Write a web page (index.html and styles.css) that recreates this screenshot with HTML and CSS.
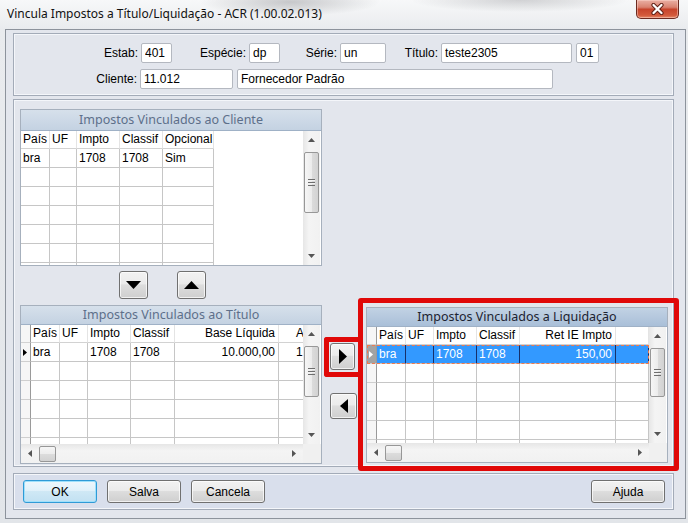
FILE: index.html
```html
<!DOCTYPE html>
<html lang="pt-BR">
<head>
    <meta charset="UTF-8">
    <meta name="viewport" content="width=device-width, initial-scale=1.0">
    <title>Vincula Impostos a Título/Liquidação - ACR (1.00.02.013)</title>
    <link rel="stylesheet" href="styles.css">
</head>
<body>
    <div class="window">
        <div class="titlebar">
            <span class="title">Vincula Impostos a Título/Liquidação - ACR (1.00.02.013)</span>
            <button class="close-btn" aria-label="Fechar">
                <svg width="13" height="12" viewBox="0 0 13 12">
                    <path d="M2.5 2 L10.5 10 M10.5 2 L2.5 10" stroke="#5e2016" stroke-width="4.2" stroke-linecap="round"/>
                    <path d="M2.5 2 L10.5 10 M10.5 2 L2.5 10" stroke="#fff" stroke-width="2.3" stroke-linecap="round"/>
                </svg>
            </button>
        </div>

        <div class="client">
            <!-- dados do titulo -->
            <div class="panel panel-header">
                <div class="field-row">
                    <label class="lbl lbl-estab">Estab:</label>
                    <input class="fld fld-estab" value="401">
                    <label class="lbl lbl-especie">Espécie:</label>
                    <input class="fld fld-especie" value="dp">
                    <label class="lbl lbl-serie">Série:</label>
                    <input class="fld fld-serie" value="un">
                    <label class="lbl lbl-titulo">Título:</label>
                    <input class="fld fld-titulo" value="teste2305">
                    <input class="fld fld-parcela" value="01">
                </div>
                <div class="field-row">
                    <label class="lbl lbl-cliente">Cliente:</label>
                    <input class="fld fld-cliente" value="11.012">
                    <input class="fld fld-nome" value="Fornecedor Padrão">
                </div>
            </div>

            <!-- browses de impostos -->
            <div class="panel panel-main">
                <div class="left-col">
                    <div class="grid-box box-cliente">
                        <div class="g-caption cap-tall">Impostos Vinculados ao Cliente</div>
                        <div class="g-main">
                            <div class="g-view">
                                <div class="g-row g-head">
                                    <div class="g-cell c-pais">País</div>
                                    <div class="g-cell c-uf">UF</div>
                                    <div class="g-cell c-impto">Impto</div>
                                    <div class="g-cell c-classif">Classif</div>
                                    <div class="g-cell c-opc">Opcional</div>
                                </div>
                                <div class="g-row">
                                    <div class="g-cell c-pais">bra</div>
                                    <div class="g-cell c-uf"></div>
                                    <div class="g-cell c-impto">1708</div>
                                    <div class="g-cell c-classif">1708</div>
                                    <div class="g-cell c-opc">Sim</div>
                                </div>
                                <div class="g-row"><div class="g-cell c-pais"></div><div class="g-cell c-uf"></div><div class="g-cell c-impto"></div><div class="g-cell c-classif"></div><div class="g-cell c-opc"></div></div>
                                <div class="g-row"><div class="g-cell c-pais"></div><div class="g-cell c-uf"></div><div class="g-cell c-impto"></div><div class="g-cell c-classif"></div><div class="g-cell c-opc"></div></div>
                                <div class="g-row"><div class="g-cell c-pais"></div><div class="g-cell c-uf"></div><div class="g-cell c-impto"></div><div class="g-cell c-classif"></div><div class="g-cell c-opc"></div></div>
                                <div class="g-row"><div class="g-cell c-pais"></div><div class="g-cell c-uf"></div><div class="g-cell c-impto"></div><div class="g-cell c-classif"></div><div class="g-cell c-opc"></div></div>
                                <div class="g-row"><div class="g-cell c-pais"></div><div class="g-cell c-uf"></div><div class="g-cell c-impto"></div><div class="g-cell c-classif"></div><div class="g-cell c-opc"></div></div>
                                <div class="g-row"><div class="g-cell c-pais"></div><div class="g-cell c-uf"></div><div class="g-cell c-impto"></div><div class="g-cell c-classif"></div><div class="g-cell c-opc"></div></div>
                            </div>
                            <div class="vscroll">
                                <div class="sb-btn"><svg width="7" height="4" viewBox="0 0 7 4"><path d="M0 4 L3.5 0 L7 4 Z" fill="#555"/></svg></div>
                                <div class="sb-thumb-v thumb-cliente"><span class="grip-v"></span></div>
                                <div class="sb-track"></div>
                                <div class="sb-btn"><svg width="7" height="4" viewBox="0 0 7 4"><path d="M0 0 L7 0 L3.5 4 Z" fill="#555"/></svg></div>
                            </div>
                        </div>
                    </div>

                    <div class="move-row">
                        <button class="win-btn move-btn btn-down" aria-label="Descer">
                            <svg width="15" height="8" viewBox="0 0 15 8"><path d="M0 0 L15 0 L7.5 8 Z" fill="#000"/></svg>
                        </button>
                        <button class="win-btn move-btn btn-up" aria-label="Subir">
                            <svg width="15" height="8" viewBox="0 0 15 8"><path d="M0 8 L7.5 0 L15 8 Z" fill="#000"/></svg>
                        </button>
                    </div>

                    <div class="grid-box box-titulo">
                        <div class="g-caption">Impostos Vinculados ao Título</div>
                        <div class="g-main">
                            <div class="g-view">
                                <div class="g-row g-head">
                                    <div class="g-cell c-ind"></div>
                                    <div class="g-cell c-pais">País</div>
                                    <div class="g-cell c-uf">UF</div>
                                    <div class="g-cell c-impto">Impto</div>
                                    <div class="g-cell c-classif2">Classif</div>
                                    <div class="g-cell c-base num">Base Líquida</div>
                                    <div class="g-cell c-aliq">Alíquota</div>
                                </div>
                                <div class="g-row">
                                    <div class="g-cell c-ind ind-cur"><svg width="4" height="7" viewBox="0 0 4 7"><path d="M0 0 L4 3.5 L0 7 Z" fill="#000"/></svg></div>
                                    <div class="g-cell c-pais">bra</div>
                                    <div class="g-cell c-uf"></div>
                                    <div class="g-cell c-impto">1708</div>
                                    <div class="g-cell c-classif2">1708</div>
                                    <div class="g-cell c-base num">10.000,00</div>
                                    <div class="g-cell c-aliq">1,50</div>
                                </div>
                                <div class="g-row"><div class="g-cell c-ind"></div><div class="g-cell c-pais"></div><div class="g-cell c-uf"></div><div class="g-cell c-impto"></div><div class="g-cell c-classif2"></div><div class="g-cell c-base"></div><div class="g-cell c-aliq"></div></div>
                                <div class="g-row"><div class="g-cell c-ind"></div><div class="g-cell c-pais"></div><div class="g-cell c-uf"></div><div class="g-cell c-impto"></div><div class="g-cell c-classif2"></div><div class="g-cell c-base"></div><div class="g-cell c-aliq"></div></div>
                                <div class="g-row"><div class="g-cell c-ind"></div><div class="g-cell c-pais"></div><div class="g-cell c-uf"></div><div class="g-cell c-impto"></div><div class="g-cell c-classif2"></div><div class="g-cell c-base"></div><div class="g-cell c-aliq"></div></div>
                                <div class="g-row"><div class="g-cell c-ind"></div><div class="g-cell c-pais"></div><div class="g-cell c-uf"></div><div class="g-cell c-impto"></div><div class="g-cell c-classif2"></div><div class="g-cell c-base"></div><div class="g-cell c-aliq"></div></div>
                                <div class="g-row"><div class="g-cell c-ind"></div><div class="g-cell c-pais"></div><div class="g-cell c-uf"></div><div class="g-cell c-impto"></div><div class="g-cell c-classif2"></div><div class="g-cell c-base"></div><div class="g-cell c-aliq"></div></div>
                            </div>
                            <div class="vscroll">
                                <div class="sb-btn"><svg width="7" height="4" viewBox="0 0 7 4"><path d="M0 4 L3.5 0 L7 4 Z" fill="#555"/></svg></div>
                                <div class="sb-thumb-v thumb-titulo"><span class="grip-v"></span></div>
                                <div class="sb-track"></div>
                                <div class="sb-btn"><svg width="7" height="4" viewBox="0 0 7 4"><path d="M0 0 L7 0 L3.5 4 Z" fill="#555"/></svg></div>
                            </div>
                        </div>
                        <div class="hscroll">
                            <div class="sb-btn-h"><svg width="4" height="7" viewBox="0 0 4 7"><path d="M4 0 L4 7 L0 3.5 Z" fill="#555"/></svg></div>
                            <div class="sb-thumb-h"></div>
                            <div class="sb-track"></div>
                            <div class="sb-btn-h"><svg width="4" height="7" viewBox="0 0 4 7"><path d="M0 0 L4 3.5 L0 7 Z" fill="#555"/></svg></div>
                            <div class="sb-corner"></div>
                        </div>
                    </div>
                </div>

                <div class="arrow-col">
                    <div class="mark-small">
                        <button class="win-btn side-btn btn-right" aria-label="Vincular">
                            <svg width="8" height="15" viewBox="0 0 8 15"><path d="M0 0 L8 7.5 L0 15 Z" fill="#000"/></svg>
                        </button>
                    </div>
                    <button class="win-btn side-btn btn-left" aria-label="Desvincular">
                        <svg width="8" height="14" viewBox="0 0 8 14"><path d="M8 0 L8 14 L0 7 Z" fill="#000"/></svg>
                    </button>
                </div>

                <div class="mark-big">
                    <div class="grid-box box-liq">
                        <div class="g-caption cap-active">Impostos Vinculados a Liquidação</div>
                        <div class="g-main">
                            <div class="g-view">
                                <div class="g-row g-head">
                                    <div class="g-cell c-ind"></div>
                                    <div class="g-cell c-pais">País</div>
                                    <div class="g-cell c-uf">UF</div>
                                    <div class="g-cell c-impto">Impto</div>
                                    <div class="g-cell c-classif">Classif</div>
                                    <div class="g-cell c-ret num">Ret IE Impto</div>
                                    <div class="g-cell c-rest"></div>
                                </div>
                                <div class="g-row sel">
                                    <div class="g-cell c-ind ind-sel"><svg width="4" height="7" viewBox="0 0 4 7"><path d="M0 0 L4 3.5 L0 7 Z" fill="#fff"/></svg></div>
                                    <div class="g-cell c-pais">bra</div>
                                    <div class="g-cell c-uf"></div>
                                    <div class="g-cell c-impto">1708</div>
                                    <div class="g-cell c-classif">1708</div>
                                    <div class="g-cell c-ret num">150,00</div>
                                    <div class="g-cell c-rest"></div>
                                </div>
                                <div class="g-row"><div class="g-cell c-ind"></div><div class="g-cell c-pais"></div><div class="g-cell c-uf"></div><div class="g-cell c-impto"></div><div class="g-cell c-classif"></div><div class="g-cell c-ret"></div><div class="g-cell c-rest"></div></div>
                                <div class="g-row"><div class="g-cell c-ind"></div><div class="g-cell c-pais"></div><div class="g-cell c-uf"></div><div class="g-cell c-impto"></div><div class="g-cell c-classif"></div><div class="g-cell c-ret"></div><div class="g-cell c-rest"></div></div>
                                <div class="g-row"><div class="g-cell c-ind"></div><div class="g-cell c-pais"></div><div class="g-cell c-uf"></div><div class="g-cell c-impto"></div><div class="g-cell c-classif"></div><div class="g-cell c-ret"></div><div class="g-cell c-rest"></div></div>
                                <div class="g-row"><div class="g-cell c-ind"></div><div class="g-cell c-pais"></div><div class="g-cell c-uf"></div><div class="g-cell c-impto"></div><div class="g-cell c-classif"></div><div class="g-cell c-ret"></div><div class="g-cell c-rest"></div></div>
                                <div class="g-row"><div class="g-cell c-ind"></div><div class="g-cell c-pais"></div><div class="g-cell c-uf"></div><div class="g-cell c-impto"></div><div class="g-cell c-classif"></div><div class="g-cell c-ret"></div><div class="g-cell c-rest"></div></div>
                            </div>
                            <div class="vscroll">
                                <div class="sb-btn"><svg width="7" height="4" viewBox="0 0 7 4"><path d="M0 4 L3.5 0 L7 4 Z" fill="#555"/></svg></div>
                                <div class="sb-thumb-v thumb-liq"><span class="grip-v"></span></div>
                                <div class="sb-track"></div>
                                <div class="sb-btn"><svg width="7" height="4" viewBox="0 0 7 4"><path d="M0 0 L7 0 L3.5 4 Z" fill="#555"/></svg></div>
                            </div>
                        </div>
                        <div class="hscroll">
                            <div class="sb-btn-h"><svg width="4" height="7" viewBox="0 0 4 7"><path d="M4 0 L4 7 L0 3.5 Z" fill="#555"/></svg></div>
                            <div class="sb-thumb-h"></div>
                            <div class="sb-track"></div>
                            <div class="sb-btn-h"><svg width="4" height="7" viewBox="0 0 4 7"><path d="M0 0 L4 3.5 L0 7 Z" fill="#555"/></svg></div>
                            <div class="sb-corner"></div>
                        </div>
                    </div>
                </div>
            </div>

            <!-- botoes -->
            <div class="panel panel-buttons">
                <button class="win-btn dlg-btn default">OK</button>
                <button class="win-btn dlg-btn">Salva</button>
                <button class="win-btn dlg-btn">Cancela</button>
                <button class="win-btn dlg-btn btn-help">Ajuda</button>
            </div>
        </div>
    </div>
</body>
</html>
```

FILE: styles.css
```css
* {
    box-sizing: border-box;
}

body {
    margin: 0;
    width: 688px;
    height: 523px;
    overflow: hidden;
    font-family: "Liberation Sans", Arial, sans-serif;
    font-size: 12px;
    color: #000;
}

.window {
    width: 688px;
    height: 523px;
    display: flex;
    flex-direction: column;
    background:
        radial-gradient(ellipse 90px 14px at 290px 2px, rgba(110, 110, 115, 0.35), transparent),
        radial-gradient(ellipse 110px 12px at 520px 0px, rgba(120, 120, 125, 0.3), transparent),
        linear-gradient(#f7f8f9, #e9ebee 30px, #e2e5e9);
}

/* title bar */
.titlebar {
    height: 29px;
    flex: none;
    display: flex;
    align-items: flex-start;
}

.title {
    margin: 5px 0 0 7px;
    font-family: "Noto Sans", sans-serif;
    font-size: 12px;
    color: #111;
}

.close-btn {
    margin-left: auto;
    margin-right: 9px;
    width: 43px;
    height: 19px;
    padding: 0;
    border: 1px solid #6b2a20;
    border-top: none;
    border-radius: 0 0 5px 5px;
    background: linear-gradient(#eab0a4, #d98270 40%, #c7442c 52%, #d35a3c 85%, #e58a6a);
    box-shadow: inset 0 0 0 1px rgba(255, 220, 210, 0.45);
    display: flex;
    align-items: center;
    justify-content: center;
}

/* client area */
.client {
    margin-left: 5px;
    width: 681px;
    height: 490px;
    border: 1px solid #8d939c;
    background: #e3e6ed;
    padding: 3px 0 0 7px;
    display: flex;
    flex-direction: column;
}

.panel {
    width: 661px;
    flex: none;
    border: 1px solid #a3abb8;
    box-shadow: inset 0 0 0 1px #f4f6fa;
}

.panel-header {
    height: 63px;
    padding-top: 9px;
    display: flex;
    flex-direction: column;
    gap: 6px;
}

.field-row {
    display: flex;
    align-items: center;
    height: 20px;
}

.lbl {
    flex: none;
    text-align: right;
    margin-right: 3px;
}

.lbl-estab { width: 124px; }
.lbl-especie { width: 74px; }
.lbl-serie { width: 57px; }
.lbl-titulo { width: 52px; }
.lbl-cliente { width: 123px; }

.fld {
    flex: none;
    height: 20px;
    padding: 0 3px;
    border: 1px solid #b4b8c0;
    border-radius: 2px;
    background: #fff;
    font-family: "Liberation Sans", Arial, sans-serif;
    font-size: 12px;
    color: #000;
}

.fld-estab { width: 31px; }
.fld-especie { width: 31px; }
.fld-serie { width: 46px; }
.fld-titulo { width: 131px; }
.fld-parcela { width: 23px; margin-left: 4px; }
.fld-cliente { width: 93px; }
.fld-nome { width: 316px; margin-left: 4px; }

/* middle panel */
.panel-main {
    height: 368px;
    margin-top: 3px;
    display: flex;
    align-items: flex-start;
}

.left-col {
    flex: none;
    margin: 9px 0 0 6px;
    width: 302px;
    display: flex;
    flex-direction: column;
}

.move-row {
    display: flex;
    height: 28px;
    margin-top: 5px;
}

.move-btn {
    width: 29px;
    height: 28px;
}

.btn-down { margin-left: 99px; }
.btn-up { margin-left: 29px; }

.arrow-col {
    flex: none;
    margin: 237px 0 0 2px;
    width: 34px;
    display: flex;
    flex-direction: column;
}

.mark-small {
    height: 40px;
    border: 5px solid #e00808;
    border-right: none;
    border-radius: 3px 0 0 3px;
    padding: 1px 0 0 1px;
}

.side-btn {
    width: 26px;
    height: 27px;
}

.btn-right {
    width: 25px;
}

.btn-left {
    margin: 16px 0 0 6px;
    height: 26px;
    width: 27px;
}

.mark-big {
    flex: none;
    margin-top: 198px;
    width: 321px;
    height: 173px;
    border: 5px solid #e00808;
    border-radius: 3px;
    padding: 4px 0 0 3px;
}

/* grids */
.grid-box {
    width: 302px;
    border: 1px solid #a6b0bd;
    background: #fff;
    display: flex;
    flex-direction: column;
}

.box-cliente { height: 157px; }
.box-titulo { height: 159px; margin-top: 6px; }
.box-liq { height: 156px; }

.g-caption {
    height: 19px;
    flex: none;
    border-bottom: 1px solid #9fb1c6;
    background: linear-gradient(#d6e0eb, #c4d2e2);
    color: #5d6f8a;
    font-family: "Noto Sans", sans-serif;
    font-size: 12.5px;
    line-height: 18px;
    text-align: center;
}

.cap-tall {
    height: 21px;
    line-height: 20px;
}

.cap-active {
    background: linear-gradient(#c2d2e4, #a9bfd8);
    color: #1c2230;
}

.g-main {
    flex: 1;
    display: flex;
    min-height: 0;
}

.g-view {
    flex: 1;
    overflow: hidden;
    background: #fff;
}

.g-row {
    display: flex;
    height: 19px;
}

.g-head {
    height: 18px;
}

.g-cell {
    flex: none;
    height: 100%;
    padding: 0 2px;
    line-height: 18px;
    white-space: nowrap;
    overflow: hidden;
    border-right: 1px solid #c6c6c6;
    border-bottom: 1px solid #c6c6c6;
}

.g-head .g-cell {
    line-height: 17px;
    border-right-color: #e4e4e4;
    border-bottom-color: #d2d2d2;
}

.num {
    text-align: right;
    padding-right: 3px;
}

.c-ind {
    width: 10px;
    padding: 0;
    background: #f6f6f6;
    border-right: 1px solid #9a9a9a;
    border-bottom: 1px solid #cfcfcf;
    display: flex;
    align-items: center;
    justify-content: center;
}

.g-head .c-ind {
    border-right-color: #9a9a9a;
}

.ind-cur {
    justify-content: flex-start;
    padding-left: 2px;
}

.ind-sel {
    background: #a3a3a3;
    justify-content: flex-start;
    padding-left: 2px;
}

.c-pais { width: 29px; }
.c-uf { width: 28px; }
.c-impto { width: 43px; }
.c-classif { width: 43px; }
.c-classif2 { width: 44px; }
.c-opc { width: 51px; }
.c-base { width: 104px; }
.c-aliq { width: 64px; padding-left: 17px; }
.c-ret { width: 96px; }
.c-rest { flex: 1; }

.box-cliente .c-uf { width: 27px; }

.g-row.sel {
    outline: 1px dashed #f07a4f;
    outline-offset: -1px;
}

.g-row.sel .g-cell:not(.c-ind) {
    background: #3399ff;
    color: #fff;
    border-right-color: #16306a;
}

/* scrollbars */
.vscroll {
    width: 17px;
    flex: none;
    display: flex;
    flex-direction: column;
    align-items: center;
    background: linear-gradient(to right, #e6e6e6, #f4f4f4 35%, #f1f1f1);
    margin-right: 1px;
}

.sb-btn {
    height: 18px;
    flex: none;
    display: flex;
    align-items: center;
    justify-content: center;
}

.sb-track {
    flex: 1;
}

.sb-thumb-v {
    width: 15px;
    flex: none;
    margin-top: 3px;
    border: 1px solid #979797;
    border-radius: 2px;
    background: linear-gradient(to right, #f6f6f6, #ececec 50%, #dcdcdc 51%, #d2d2d2);
    display: flex;
    align-items: center;
    justify-content: center;
}

.thumb-cliente { height: 61px; }
.thumb-titulo { height: 51px; }
.thumb-liq { height: 49px; }

.grip-v {
    width: 7px;
    height: 7px;
    background: repeating-linear-gradient(#6e6e6e 0 1px, #f2f2f2 1px 2px, transparent 2px 3px);
}

.hscroll {
    height: 19px;
    flex: none;
    display: flex;
    align-items: center;
    background: linear-gradient(#e6e6e6, #f4f4f4 35%, #f1f1f1);
}

.sb-btn-h {
    width: 18px;
    height: 100%;
    flex: none;
    display: flex;
    align-items: center;
    justify-content: center;
}

.sb-thumb-h {
    width: 17px;
    height: 16px;
    flex: none;
    border: 1px solid #979797;
    border-radius: 2px;
    background: linear-gradient(#f6f6f6, #ececec 50%, #dcdcdc 51%, #d2d2d2);
}

.sb-corner {
    width: 18px;
    height: 100%;
    flex: none;
    background: #f0f0f0;
}

/* buttons */
.win-btn {
    padding: 0;
    border: 1px solid #707070;
    border-radius: 3px;
    background: linear-gradient(#f2f2f2, #ebebeb 45%, #dddddd 50%, #cfcfcf);
    box-shadow: inset 0 0 0 1px rgba(255, 255, 255, 0.7);
    font-family: "Liberation Sans", Arial, sans-serif;
    font-size: 12px;
    color: #000;
    display: flex;
    align-items: center;
    justify-content: center;
    flex: none;
}

.panel-buttons {
    height: 37px;
    margin-top: 6px;
    padding: 6px 8px 0 9px;
    display: flex;
    align-items: flex-start;
    gap: 10px;
    background: #d9dfec;
}

.dlg-btn {
    width: 74px;
    height: 23px;
}

.dlg-btn.default {
    border-color: #2f9ad6;
    background: linear-gradient(#eef7fc, #e1f1fa 45%, #cfe8f5 50%, #c2e1f2);
    box-shadow: inset 0 0 0 1px #9fe0fb;
}

.btn-help {
    margin-left: auto;
}
```
